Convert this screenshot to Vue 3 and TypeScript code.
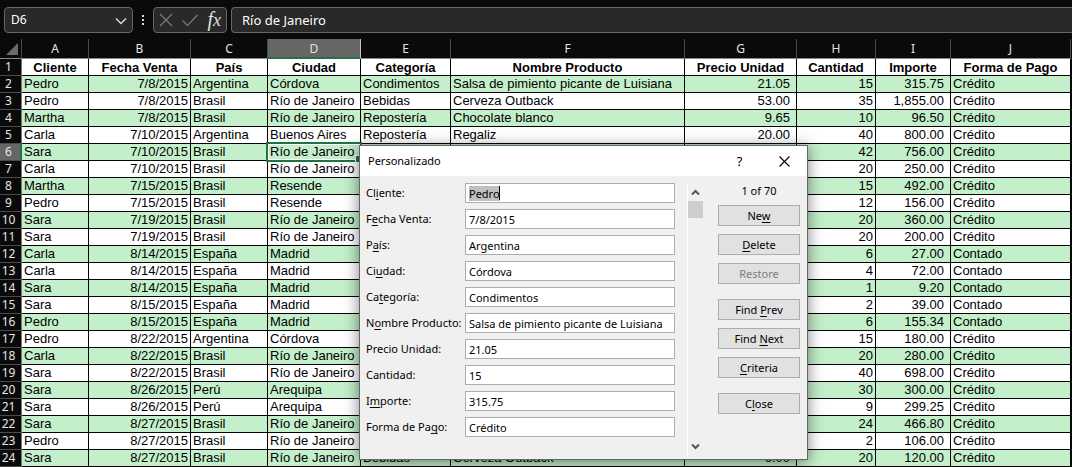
<script setup lang="ts">
import { onMounted, ref } from 'vue'

interface Field {
  id: string
  before: string
  key: string
  after: string
  value: string
}

interface Action {
  before: string
  key: string
  after: string
  disabled?: boolean
  gap?: boolean
}

const columns = ['A', 'B', 'C', 'D', 'E', 'F', 'G', 'H', 'I', 'J']
const headings = ['Cliente', 'Fecha Venta', 'País', 'Ciudad', 'Categoría', 'Nombre Producto', 'Precio Unidad', 'Cantidad', 'Importe', 'Forma de Pago']

const rows: string[][] = [
  ['Pedro', '7/8/2015', 'Argentina', 'Córdova', 'Condimentos', 'Salsa de pimiento picante de Luisiana', '21.05', '15', '315.75', 'Crédito'],
  ['Pedro', '7/8/2015', 'Brasil', 'Río de Janeiro', 'Bebidas', 'Cerveza Outback', '53.00', '35', '1,855.00', 'Crédito'],
  ['Martha', '7/8/2015', 'Brasil', 'Río de Janeiro', 'Repostería', 'Chocolate blanco', '9.65', '10', '96.50', 'Crédito'],
  ['Carla', '7/10/2015', 'Argentina', 'Buenos Aires', 'Repostería', 'Regaliz', '20.00', '40', '800.00', 'Crédito'],
  ['Sara', '7/10/2015', 'Brasil', 'Río de Janeiro', '', '', '', '42', '756.00', 'Crédito'],
  ['Carla', '7/10/2015', 'Brasil', 'Río de Janeiro', '', '', '', '20', '250.00', 'Crédito'],
  ['Martha', '7/15/2015', 'Brasil', 'Resende', '', '', '', '15', '492.00', 'Crédito'],
  ['Pedro', '7/15/2015', 'Brasil', 'Resende', '', '', '', '12', '156.00', 'Crédito'],
  ['Sara', '7/19/2015', 'Brasil', 'Río de Janeiro', '', '', '', '20', '360.00', 'Crédito'],
  ['Sara', '7/19/2015', 'Brasil', 'Río de Janeiro', '', '', '', '20', '200.00', 'Crédito'],
  ['Carla', '8/14/2015', 'España', 'Madrid', '', '', '', '6', '27.00', 'Contado'],
  ['Carla', '8/14/2015', 'España', 'Madrid', '', '', '', '4', '72.00', 'Contado'],
  ['Sara', '8/14/2015', 'España', 'Madrid', '', '', '', '1', '9.20', 'Contado'],
  ['Sara', '8/15/2015', 'España', 'Madrid', '', '', '', '2', '39.00', 'Contado'],
  ['Pedro', '8/15/2015', 'España', 'Madrid', '', '', '', '6', '155.34', 'Contado'],
  ['Pedro', '8/22/2015', 'Argentina', 'Córdova', '', '', '', '15', '180.00', 'Crédito'],
  ['Carla', '8/22/2015', 'Brasil', 'Río de Janeiro', '', '', '', '20', '280.00', 'Crédito'],
  ['Sara', '8/22/2015', 'Brasil', 'Río de Janeiro', '', '', '', '40', '698.00', 'Crédito'],
  ['Sara', '8/26/2015', 'Perú', 'Arequipa', '', '', '', '30', '300.00', 'Crédito'],
  ['Sara', '8/26/2015', 'Perú', 'Arequipa', '', '', '', '9', '299.25', 'Crédito'],
  ['Sara', '8/27/2015', 'Brasil', 'Río de Janeiro', '', '', '', '24', '466.80', 'Crédito'],
  ['Pedro', '8/27/2015', 'Brasil', 'Río de Janeiro', '', '', '', '2', '106.00', 'Crédito'],
  ['Sara', '8/27/2015', 'Brasil', 'Río de Janeiro', 'Bebidas', 'Cerveza Outback', '6.00', '20', '120.00', 'Crédito'],
]

const fields = ref<Field[]>([
  { id: 'cliente', before: 'Cl', key: 'i', after: 'ente:', value: 'Pedro' },
  { id: 'fecha', before: 'F', key: 'e', after: 'cha Venta:', value: '7/8/2015' },
  { id: 'pais', before: 'P', key: 'a', after: 'ís:', value: 'Argentina' },
  { id: 'ciudad', before: 'Ci', key: 'u', after: 'dad:', value: 'Córdova' },
  { id: 'categoria', before: 'Ca', key: 't', after: 'egoría:', value: 'Condimentos' },
  { id: 'producto', before: 'N', key: 'o', after: 'mbre Producto:', value: 'Salsa de pimiento picante de Luisiana' },
  { id: 'precio', before: 'Precio Unidad:', key: '', after: '', value: '21.05' },
  { id: 'cantidad', before: 'Cantidad:', key: '', after: '', value: '15' },
  { id: 'importe', before: 'I', key: 'm', after: 'porte:', value: '315.75' },
  { id: 'pago', before: 'Forma de Pa', key: 'g', after: 'o:', value: 'Crédito' },
])

const actions: Action[] = [
  { before: 'Ne', key: 'w', after: '' },
  { before: '', key: 'D', after: 'elete' },
  { before: 'Restore', key: '', after: '', disabled: true },
  { before: 'Find ', key: 'P', after: 'rev', gap: true },
  { before: 'Find ', key: 'N', after: 'ext' },
  { before: '', key: 'C', after: 'riteria' },
  { before: 'C', key: 'l', after: 'ose', gap: true },
]

const formula = ref('Río de Janeiro')
const form = ref<HTMLElement | null>(null)

onMounted(() => {
  const first = form.value?.querySelector('input')
  first?.focus()
  first?.select()
})
</script>

<template>
  <main class="app">
    <header class="formula-bar">
      <div class="box name-box">
        <select class="name-select" aria-label="Name box"><option>D6</option></select>
        <svg class="chevron" viewBox="0 0 12 8" width="12" height="8"><path d="M1 1.5 6 6.5 11 1.5" /></svg>
      </div>
      <svg class="grip" viewBox="0 0 2 12" width="2" height="12"><path d="M0 1h2v2H0zM0 5h2v2H0zM0 9h2v2H0z" /></svg>
      <div class="box tools">
        <button type="button" class="tool" aria-label="Cancel">
          <svg viewBox="0 0 14 14" width="14" height="14"><path d="M1 1 13 13M13 1 1 13" /></svg>
        </button>
        <button type="button" class="tool" aria-label="Enter">
          <svg viewBox="0 0 16 14" width="16" height="14"><path d="M.5 7.500 5.500 12.500 15.500 2" /></svg>
        </button>
        <button type="button" class="tool fx" aria-label="Insert function"><span class="f">f</span><span class="x">x</span></button>
      </div>
      <input v-model="formula" class="box formula" aria-label="Formula" />
    </header>

    <table class="sheet">
      <colgroup>
        <col class="w-num" /><col v-for="c in columns" :key="c" :class="'w-' + c" />
      </colgroup>
      <thead>
        <tr class="letters">
          <th class="corner"><svg viewBox="0 0 12 12" width="12" height="12"><path d="M12 0V12H0z" /></svg></th>
          <th v-for="c in columns" :key="c" scope="col" :class="{ active: c === 'D' }">{{ c }}</th>
        </tr>
      </thead>
      <tbody>
        <tr class="headings">
          <th class="num" scope="row">1</th>
          <td v-for="h in headings" :key="h">{{ h }}</td>
        </tr>
        <tr v-for="(row, r) in rows" :key="r" :class="{ band: r % 2 === 0 }">
          <th class="num" scope="row" :class="{ active: r === 4 }">{{ r + 2 }}</th>
          <td v-for="(cell, c) in row" :key="c" :class="['c-' + columns[c], { selected: r === 4 && c === 3 }]">{{ cell }}</td>
        </tr>
      </tbody>
    </table>

    <section class="dialog" role="dialog" aria-labelledby="dialog-title">
      <div class="titlebar">
        <h1 id="dialog-title">Personalizado</h1>
        <button type="button" class="cap" aria-label="Help">?</button>
        <button type="button" class="cap" aria-label="Dismiss">
          <svg viewBox="0 0 11 11" width="11" height="11"><path d="M.5.5l10 10M10.500.5l-10 10" /></svg>
        </button>
      </div>
      <div class="body">
        <form ref="form" class="fields" @submit.prevent>
          <div v-for="(f, i) in fields" :key="f.id" class="field">
            <label :for="f.id">{{ f.before }}<u v-if="f.key">{{ f.key }}</u>{{ f.after }}</label>
            <div class="entry">
              <input :id="f.id" v-model="f.value" type="text" />
              <span v-if="i === 0" class="caret"></span>
            </div>
          </div>
        </form>
        <div class="scroll">
          <button type="button" class="arrow" aria-label="Previous record">
            <svg viewBox="0 0 9 7" width="9" height="7"><path d="M1 5.500 4.500 2 8 5.500" /></svg>
          </button>
          <div class="thumb"></div>
          <button type="button" class="arrow down" aria-label="Next record">
            <svg viewBox="0 0 9 7" width="9" height="7"><path d="M1 1.500 4.500 5 8 1.500" /></svg>
          </button>
        </div>
        <div class="actions">
          <p class="count">1 of 70</p>
          <button v-for="(a, i) in actions" :key="i" type="button" class="action" :class="{ gap: a.gap }" :disabled="a.disabled">{{ a.before }}<u v-if="a.key">{{ a.key }}</u>{{ a.after }}</button>
        </div>
      </div>
    </section>
  </main>
</template>

<style>
html,
body {
  background: #0a0a0a;
  overflow: hidden;
}
</style>

<style scoped>
* {
  box-sizing: border-box;
}
.app {
  position: relative;
  background: #0a0a0a;
  font-family: "Noto Sans", "Open Sans", sans-serif;
}
button,
input,
select {
  margin: 0;
  padding: 0;
  border: 0;
  border-radius: 0;
  outline: 0;
  background: none;
  color: inherit;
  font: inherit;
  appearance: none;
}
svg {
  display: block;
}
.formula-bar {
  display: flex;
  align-items: center;
  height: 39px;
  padding: 0 0 0 4px;
  color: #fff;
  font-size: 13px;
}
.box {
  height: 26px;
  border: 1px solid #666;
  border-radius: 4px;
  background: #292929;
}
.name-box {
  position: relative;
  width: 129px;
  flex: none;
}
.name-select {
  width: 100%;
  height: 24px;
  padding-left: 6px;
  font-size: 12px;
}
.name-select option {
  color: #000;
}
.chevron {
  position: absolute;
  right: 5px;
  top: 9px;
  pointer-events: none;
}
.chevron path {
  fill: none;
  stroke: #d8d8d8;
  stroke-width: 1.5;
}
.grip {
  margin: 0 9px;
  flex: none;
}
.grip path {
  fill: #d8d8d8;
}
.tools {
  display: flex;
  align-items: center;
  justify-content: space-between;
  width: 74px;
  flex: none;
  padding: 0 5px;
}
.tool path {
  fill: none;
  stroke: #7c7c7c;
  stroke-width: 1.2;
}
.fx {
  display: flex;
  align-items: baseline;
  color: #e0e0e0;
  font-family: "Liberation Serif", serif;
  font-style: italic;
  line-height: 20px;
}
.f {
  font-size: 20px;
}
.x {
  font-size: 18px;
}
.formula {
  flex: 1;
  min-width: 0;
  margin-left: 4px;
  padding-left: 10px;
  border-right: 0;
  border-radius: 4px 0 0 4px;
}
.sheet {
  width: calc(100% - 1px);
  table-layout: fixed;
  border-collapse: separate;
  border-spacing: 0;
  color: #000;
  font-family: "Liberation Sans", Arial, sans-serif;
  font-size: 13px;
  line-height: 15px;
}
.w-num { width: 22px; }
.w-A { width: 67px; }
.w-B { width: 102px; }
.w-C { width: 77px; }
.w-D { width: 93px; }
.w-E { width: 90px; }
.w-F { width: 234px; }
.w-G { width: 112px; }
.w-H { width: 79px; }
.w-I { width: 75px; }
.w-J { width: 120px; }
.letters th {
  height: 20px;
  padding: 1px 0 0;
  border-right: 1px solid #4a4a4a;
  border-bottom: 1px solid #8a8a8a;
  color: #e4e4e4;
  font-family: "Noto Sans", sans-serif;
  font-size: 12px;
  font-weight: 400;
  line-height: 18px;
}
.letters .active {
  border-right-color: #c4c4c4;
  border-bottom-color: #217346;
  background: #666;
  box-shadow: inset 0 -1px #217346;
}
.letters .corner {
  padding: 0 3px 3px 6px;
  vertical-align: bottom;
}
.corner path {
  fill: #6a6a6a;
}
.num {
  height: 17px;
  padding: 0 4px 0 0;
  border-right: 1px solid #777;
  border-bottom: 1px solid #4a4a4a;
  color: #e4e4e4;
  font-family: "Noto Sans", sans-serif;
  font-size: 12px;
  font-weight: 400;
  line-height: 16px;
}
.num.active {
  border-right-color: #217346;
  background: #666;
  box-shadow: inset -1px 0 #217346;
}
td {
  height: 17px;
  padding: 0 2px 1px;
  border-right: 1px solid #000;
  border-bottom: 1px solid #000;
  background: #fff;
  white-space: nowrap;
}
.headings td {
  padding: 1px 0 0;
  font-weight: 700;
  text-align: center;
}
.band td {
  background: #c3efca;
}
.c-B,
.c-H {
  text-align: right;
}
.c-G,
.c-I {
  padding-right: 6px;
  text-align: right;
}
.selected {
  position: relative;
}
.selected::before {
  content: "";
  position: absolute;
  inset: -2px;
  border: 2px solid #217346;
  box-shadow: inset 0 0 0 1px #fff;
}
.selected::after {
  content: "";
  position: absolute;
  right: -3px;
  bottom: -3px;
  width: 6px;
  height: 6px;
  border: 1px solid #fff;
  background: #217346;
}
.dialog {
  position: absolute;
  left: 359px;
  top: 145px;
  width: 449px;
  border: 1px solid #666;
  background: #f0f0f0;
  box-shadow: 0 2px 14px rgba(0, 0, 0, 0.5);
  color: #000;
  font-size: 11px;
  line-height: 16px;
}
.titlebar {
  display: flex;
  align-items: center;
  height: 30px;
  padding-left: 8px;
  background: #fff;
}
h1 {
  flex: 1;
  margin: 0;
  font-size: 11px;
  font-weight: 400;
}
.cap {
  display: grid;
  place-items: center;
  width: 45px;
  height: 28px;
  font-size: 13px;
}
.cap path {
  fill: none;
  stroke: #000;
  stroke-width: 1.1;
}
.body {
  display: flex;
  padding: 7px 7px 4px 6px;
}
.fields {
  display: grid;
  flex: 1;
  align-content: start;
  gap: 6px;
}
.field {
  display: grid;
  grid-template-columns: 99px 1fr;
  align-items: center;
}
label {
  white-space: nowrap;
}
u {
  text-underline-offset: 2px;
}
.entry {
  position: relative;
}
.entry input {
  display: block;
  width: 100%;
  height: 20px;
  padding: 0 3px;
  border: 1px solid #abadb3;
  background: #fff;
}
.entry input::selection {
  background: #c0c0c0;
  color: #000;
}
.caret {
  position: absolute;
  left: 34px;
  top: 3px;
  width: 1px;
  height: 14px;
  background: #000;
}
.scroll {
  display: flex;
  flex-direction: column;
  width: 16px;
  margin: 1px 0 0 12px;
  border-left: 1px solid #fff;
}
.arrow {
  display: grid;
  place-items: center;
  width: 15px;
  height: 17px;
}
.arrow path {
  fill: none;
  stroke: #555;
  stroke-width: 2;
}
.thumb {
  width: 15px;
  height: 17px;
  background: #cdcdcd;
}
.down {
  margin-top: auto;
}
.actions {
  display: flex;
  flex-direction: column;
  gap: 8px;
  width: 82px;
  height: 272px;
  margin-left: 15px;
}
.count {
  height: 14px;
  margin: 0;
  text-align: center;
}
.action {
  height: 21px;
  border: 1px solid #adadad;
  background: #e1e1e1;
  line-height: 18px;
}
.action:disabled {
  color: #7c7c7c;
}
.gap {
  margin-top: 7px;
}
</style>
